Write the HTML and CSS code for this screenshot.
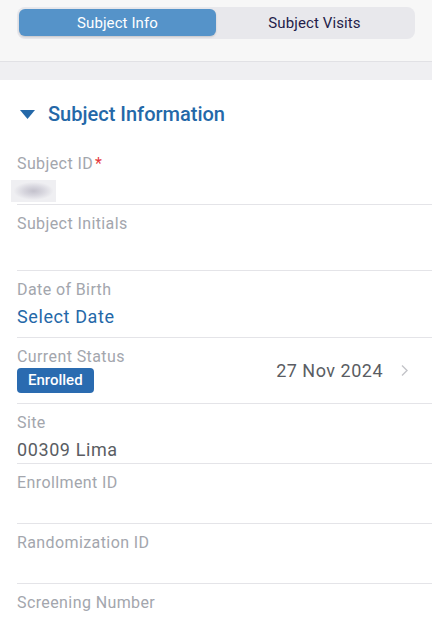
FILE: index.html
```html
<!DOCTYPE html>
<html lang="en">
<head>
<meta charset="utf-8">
<title>Subject Info</title>
<link rel="stylesheet" href="styles.css">
</head>
<body>
<div class="topbar">
  <div class="segmented">
    <div class="seg seg-active">Subject Info</div>
    <div class="seg">Subject Visits</div>
  </div>
</div>
<div class="band"></div>
<div class="section">
  <div class="section-header">
    <svg class="caret" width="15" height="9" viewBox="0 0 15 9"><path d="M0 0 H15 L7.5 9 Z" fill="#2468a8"/></svg>
    <span class="section-title">Subject Information</span>
  </div>
  <div class="row">
    <div class="label">Subject ID<span class="req">*</span></div>
    <div class="blurred"></div>
  </div>
  <div class="row row-tall">
    <div class="label">Subject Initials</div>
  </div>
  <div class="row row-taller">
    <div class="label">Date of Birth</div>
    <div class="value value-link">Select Date</div>
  </div>
  <div class="row row-tall row-split">
    <div class="left">
      <div class="label">Current Status</div>
      <div class="badge">Enrolled</div>
    </div>
    <div class="right">
      <span class="date">27 Nov 2024</span>
      <svg class="chev" width="9" height="13" viewBox="0 0 9 13"><path d="M2 1.5 L7 6.5 L2 11.5" fill="none" stroke="#c3c4c9" stroke-width="1.4"/></svg>
    </div>
  </div>
  <div class="row">
    <div class="label">Site</div>
    <div class="value">00309 Lima</div>
  </div>
  <div class="row">
    <div class="label">Enrollment ID</div>
  </div>
  <div class="row">
    <div class="label">Randomization ID</div>
  </div>
  <div class="row row-last">
    <div class="label">Screening Number</div>
  </div>
</div>
</body>
</html>
```
FILE: styles.css
```css
html, body {
  margin: 0;
  padding: 0;
  background: #ffffff;
  font-family: Roboto, "Noto Sans", Arial, sans-serif;
}
.topbar {
  height: 62px;
  background: #f7f7f7;
  border-bottom: 1px solid #e1e1e5;
  box-sizing: border-box;
  padding: 7px 17px 0 17px;
}
.segmented {
  width: 398px;
  height: 32px;
  box-sizing: border-box;
  background: #e8e8ec;
  border-radius: 8px;
  padding: 2px 2px 3px 2px;
  display: flex;
}
.seg {
  flex: 1;
  display: flex;
  align-items: center;
  justify-content: center;
  font-size: 15px;
  letter-spacing: 0.1px;
  color: #241d4a;
  border-radius: 6px;
}
.seg-active {
  background: #5593c9;
  color: #ffffff;
  box-shadow: 0 1px 2px rgba(0,0,0,0.15);
}
.band {
  height: 18px;
  background: #efeff2;
}
.section-header {
  display: flex;
  align-items: center;
  padding: 22px 0 19px 20px;
  height: 24px;
}
.caret {
  margin-right: 13px;
  margin-top: 1px;
}
.section-title {
  font-size: 20px;
  line-height: 24px;
  font-weight: 500;
  color: #2468a8;
}
.row {
  margin-left: 17px;
  height: 60px;
  box-sizing: border-box;
  border-bottom: 1px solid #e4e4e8;
  padding-top: 9px;
}
.row-tall {
  height: 66px;
}
.row-taller {
  height: 67px;
}
.row-last {
  height: 59px;
}
.label {
  font-size: 16px;
  line-height: 20px;
  color: #a3a6ad;
  letter-spacing: 0.4px;
}
.req {
  color: #e5393d;
  margin-left: 2px;
}
.value {
  margin-top: 4px;
  font-size: 18px;
  line-height: 26px;
  color: #5a5d63;
  letter-spacing: 0.6px;
}
.value-link {
  color: #2468a8;
}
.blurred {
  margin: 6px 0 0 -6px;
  width: 45px;
  height: 22px;
  background: radial-gradient(ellipse 20px 9px at 50% 50%, #c3c1cc 0%, #d7d6de 50%, #efeff2 100%);
}
.row-split {
  display: flex;
  justify-content: space-between;
}
.badge {
  display: inline-block;
  margin-top: 1px;
  height: 25px;
  line-height: 25px;
  padding: 0 11px;
  background: #2a6bb0;
  color: #ffffff;
  font-size: 15px;
  font-weight: 500;
  border-radius: 4px;
}
.right {
  display: flex;
  align-items: center;
  padding-right: 23px;
  margin-top: -9px;
}
.date {
  font-size: 18px;
  color: #5a5d63;
  letter-spacing: 0.5px;
  margin-right: 17px;
}
```
